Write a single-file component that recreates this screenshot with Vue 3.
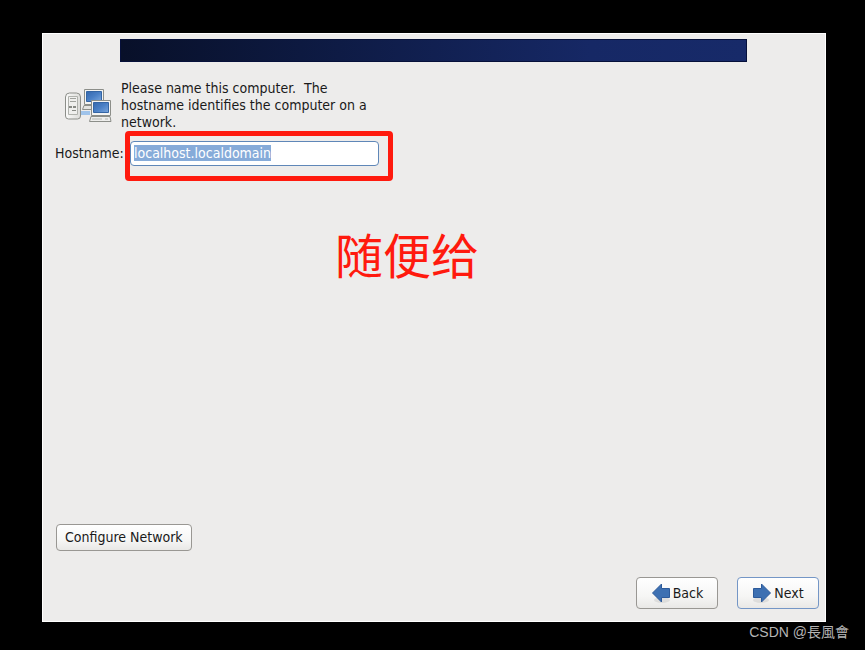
<script setup>
import { onMounted, ref } from 'vue'

const hostname = ref('localhost.localdomain')
const hostnameInput = ref(null)

onMounted(() => {
  hostnameInput.value.focus()
  hostnameInput.value.select()
})
</script>

<template>
  <div class="desktop">
    <main class="installer">
      <header class="banner"></header>

      <section class="intro">
        <svg class="computers" viewBox="0 0 48 36" aria-hidden="true">
          <defs>
            <linearGradient id="screen" x1="0" y1="0" x2="1" y2="1">
              <stop offset="0" stop-color="#3567ad" />
              <stop offset="0.5" stop-color="#4a80c6" />
              <stop offset="1" stop-color="#7ba6dc" />
            </linearGradient>
            <linearGradient id="tower" x1="0" y1="0" x2="1" y2="0">
              <stop offset="0" stop-color="#fafaf9" />
              <stop offset="1" stop-color="#dcdcd9" />
            </linearGradient>
          </defs>
          <path d="M17 24h9M17 26h9" stroke="#9fc3ea" stroke-width="2" />
          <path d="M20.500 1.500h19v15h-19z" fill="#f4f4f2" stroke="#8c8e89" />
          <path d="M22.500 3.500h15v10h-15z" fill="url(#screen)" stroke="#3465a4" />
          <path d="M20 17.500h18v4H18.500z" fill="#e4e4e1" stroke="#8c8e89" />
          <path d="M1.500 9q0-4 4-4h7q4 0 4 4v19q0 3-3 3h-9q-3 0-3-3z" fill="url(#tower)" stroke="#8c8e89" />
          <path d="M4.500 8.500h9v18h-9z" fill="#efefed" stroke="#b0b2ad" />
          <path d="M6 10.500h6M6 13.500h6" stroke="#a0a29d" />
          <path d="M5 19h3M9 19h3" stroke="#888a85" stroke-width="2" />
          <path d="M8 22.500h4" stroke="#888a85" />
          <path d="M27.500 12.500h19v15h-19z" fill="#f4f4f2" stroke="#8c8e89" />
          <path d="M29.500 14.500h15v10h-15z" fill="url(#screen)" stroke="#3465a4" />
          <path d="M27 28.500h19l1 5H25.500z" fill="#eeeeec" stroke="#8c8e89" />
          <path d="M28 31h10M41 31h3" stroke="#b4b6b1" />
        </svg>
        <p class="message">Please name this computer.&nbsp; The hostname identifies the computer on a network.</p>
      </section>

      <form class="host-row" @submit.prevent>
        <label for="hostname">Hostname:</label>
        <div class="field">
          <input id="hostname" ref="hostnameInput" v-model="hostname" type="text" autocomplete="off" spellcheck="false" />
          <span class="highlight"></span>
        </div>
      </form>

      <p class="note" lang="zh-CN">随便给</p>

      <div class="network">
        <button type="button" class="btn small">Configure Network</button>
      </div>

      <footer class="actions">
        <button type="button" class="btn">
          <svg class="arrow" viewBox="0 0 20 22" aria-hidden="true">
            <ellipse cx="11" cy="18" rx="8" ry="3" fill="#000" opacity="0.08" />
            <path d="M1.500 11l9-9v4.500h8v9h-8v4.500z" fill="#3d70b2" stroke="#2d5a9a" stroke-linejoin="round" />
          </svg>
          Back
        </button>
        <button type="button" class="btn default">
          <svg class="arrow" viewBox="0 0 20 22" aria-hidden="true">
            <ellipse cx="9" cy="18" rx="8" ry="3" fill="#000" opacity="0.08" />
            <path d="M18.500 11l-9-9v4.500h-8v9h8v4.500z" fill="#3d70b2" stroke="#2d5a9a" stroke-linejoin="round" />
          </svg>
          Next
        </button>
      </footer>
    </main>
    <p class="credit" lang="zh-TW">CSDN @長風會</p>
  </div>
</template>

<style>
body {
  margin: 0;
  background: #000;
}
</style>

<style scoped>
.desktop {
  box-sizing: border-box;
  display: flex;
  flex-direction: column;
  min-height: 100vh;
  padding: 33px 39px 0 42px;
  background: #000;
  color: #1a1a1a;
  font-family: "DejaVu Sans Condensed", "DejaVu Sans", sans-serif;
  font-size: 14px;
  line-height: 17px;
}

p {
  margin: 0;
}

.installer {
  position: relative;
  box-sizing: border-box;
  flex: 1;
  display: flex;
  flex-direction: column;
  padding: 5px 6px 12px 12px;
  background: #edeceb;
  border: 1px solid #fff;
}

.banner {
  box-sizing: border-box;
  height: 23px;
  margin: 0 72px 0 65px;
  border: 1px solid #06103a;
  background: linear-gradient(90deg, #081029, #0e1b45 35%, #162865 75%, #172a69);
}

.intro {
  display: flex;
  align-items: flex-start;
  gap: 9px;
  margin-top: 18px;
  padding-left: 9px;
}

.computers {
  flex: none;
  width: 48px;
  height: 36px;
  margin-top: 8px;
}

.message {
  max-width: 256px;
}

.host-row {
  display: flex;
  align-items: center;
  gap: 5px;
  margin-top: 10px;
}

.host-row label {
  width: 70px;
  white-space: nowrap;
}

.field {
  position: relative;
  width: 249px;
}

.field input {
  box-sizing: border-box;
  display: block;
  width: 100%;
  height: 25px;
  padding: 0 3px 2px;
  border: 1px solid #5f87b8;
  border-radius: 4px;
  outline: 0;
  background: #fff;
  color: #1a1a1a;
  font: inherit;
}

.field input::selection {
  background: #86abd9;
  color: #fff;
}

.highlight {
  position: absolute;
  inset: -10px -14px -15px -5px;
  border: 5px solid #ff1a0e;
  border-radius: 4px;
  pointer-events: none;
}

.note {
  position: absolute;
  top: 184px;
  left: 292px;
  color: #ff1a0e;
  font-family: "Noto Sans CJK SC", sans-serif;
  font-size: 48px;
  line-height: 70px;
}

.network {
  margin-top: auto;
  padding-left: 1px;
}

.actions {
  display: flex;
  justify-content: flex-end;
  gap: 19px;
  margin-top: 26px;
}

.btn {
  box-sizing: border-box;
  display: inline-flex;
  align-items: center;
  justify-content: center;
  gap: 2px;
  min-width: 82px;
  height: 32px;
  padding: 0 8px;
  border: 1px solid #999793;
  border-radius: 4px;
  background: linear-gradient(#fff, #f6f6f5 60%, #e9e8e6);
  color: #1a1a1a;
  font: inherit;
}

.btn.small {
  height: 27px;
}

.btn.default {
  border-color: #7496c6;
}

.arrow {
  width: 20px;
  height: 22px;
}

.credit {
  align-self: flex-end;
  margin-right: -23px;
  padding: 0 0 8px;
  color: #b5b5b5;
  font-family: "Liberation Sans", "Noto Sans CJK TC", sans-serif;
  font-size: 14px;
  line-height: 20px;
}
</style>
